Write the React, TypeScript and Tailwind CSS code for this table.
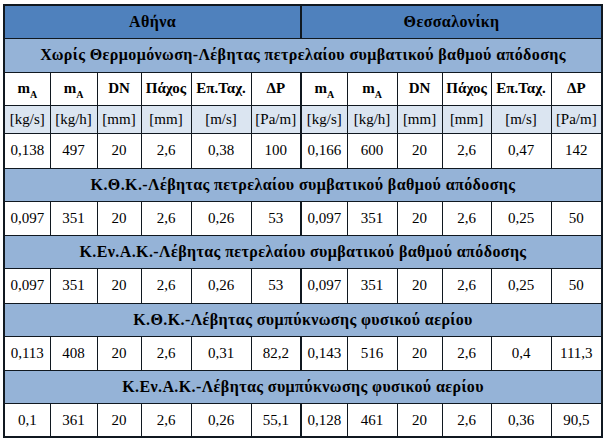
import React from "react"

const colWidths = ["w-[46px]", "w-[47px]", "w-[44px]", "w-[50px]", "w-[60px]", "w-[50px]", "w-[46px]", "w-[50px]", "w-[45px]", "w-[49px]", "w-[60px]", "w-[51px]"]

type Row = string[]

const sections: { title: string; data: Row }[] = [
  {
    title: "Κ.Θ.Κ.-Λέβητας πετρελαίου συμβατικού βαθμού απόδοσης",
    data: ["0,097", "351", "20", "2,6", "0,26", "53", "0,097", "351", "20", "2,6", "0,25", "50"],
  },
  {
    title: "Κ.Εν.Α.Κ.-Λέβητας πετρελαίου συμβατικού βαθμού απόδοσης",
    data: ["0,097", "351", "20", "2,6", "0,26", "53", "0,097", "351", "20", "2,6", "0,25", "50"],
  },
  {
    title: "Κ.Θ.Κ.-Λέβητας συμπύκνωσης φυσικού αερίου",
    data: ["0,113", "408", "20", "2,6", "0,31", "82,2", "0,143", "516", "20", "2,6", "0,4", "111,3"],
  },
  {
    title: "Κ.Εν.Α.Κ.-Λέβητας συμπύκνωσης φυσικού αερίου",
    data: ["0,1", "361", "20", "2,6", "0,26", "55,1", "0,128", "461", "20", "2,6", "0,36", "90,5"],
  },
]

const firstData = ["0,138", "497", "20", "2,6", "0,38", "100", "0,166", "600", "20", "2,6", "0,47", "142"]
const units = ["[kg/s]", "[kg/h]", "[mm]", "[mm]", "[m/s]", "[Pa/m]"]

const cell =
  "border border-[#101820] text-center align-middle p-0 text-black font-['Liberation_Serif',serif]"

function divider(i: number) {
  return i === 5 ? " border-r-2" : ""
}

function HeadLabels() {
  const labels: React.ReactNode[] = [
    <>m<sub className="text-[10px] align-[-2px]">A</sub></>,
    <>m<sub className="text-[10px] align-[-2px]">A</sub></>,
    "DN",
    "Πάχος",
    "Επ.Ταχ.",
    "ΔP",
  ]
  return (
    <tr className="h-[33px] bg-white">
      {[...labels, ...labels].map((l, i) => (
        <td key={i} className={`${cell} font-bold text-[15px]${divider(i)}`}>
          {l}
        </td>
      ))}
    </tr>
  )
}

function DataRow({ values, height }: { values: Row; height: string }) {
  return (
    <tr className={`${height} bg-white`}>
      {values.map((v, i) => (
        <td key={i} className={`${cell} text-[15px] tracking-[0.5px]${divider(i)}`}>
          {v}
        </td>
      ))}
    </tr>
  )
}

function SectionRow({ title, height }: { title: string; height: string }) {
  return (
    <tr className={`${height} bg-[#95b3d7]`}>
      <td colSpan={12} className={`${cell} font-bold text-[16px] tracking-[0.4px]`}>
        {title}
      </td>
    </tr>
  )
}

export default function App() {
  return (
    <div className="min-h-[440px] w-[606px] bg-white pl-[3px] pt-[4px] text-black font-['Liberation_Serif',serif]">
      <table className="w-[598px] table-fixed border-collapse border-2 border-[#101820]">
        <colgroup>
          {colWidths.map((w, i) => (
            <col key={i} className={w} />
          ))}
        </colgroup>
        <tbody>
          <tr className="h-[33px] bg-[#4f81bd]">
            <td colSpan={6} className={`${cell} border-r-2 font-bold text-[16px] tracking-[0.4px]`}>
              Αθήνα
            </td>
            <td colSpan={6} className={`${cell} font-bold text-[16px] tracking-[0.4px]`}>
              Θεσσαλονίκη
            </td>
          </tr>
          <SectionRow title="Χωρίς Θερμομόνωση-Λέβητας πετρελαίου συμβατικού βαθμού απόδοσης" height="h-[34px]" />
          <HeadLabels />
          <tr className="h-[28px] bg-[#dbe5f1]">
            {[...units, ...units].map((u, i) => (
              <td key={i} className={`${cell} text-[15px] tracking-[0.3px]${divider(i)}`}>
                {u}
              </td>
            ))}
          </tr>
          <DataRow values={firstData} height="h-[35px]" />
          {sections.map((s, k) => (
            <React.Fragment key={k}>
              <SectionRow title={s.title} height="h-[33px]" />
              <DataRow values={s.data} height={k === 1 ? "h-[35px]" : "h-[34px]"} />
            </React.Fragment>
          ))}
        </tbody>
      </table>
    </div>
  )
}
